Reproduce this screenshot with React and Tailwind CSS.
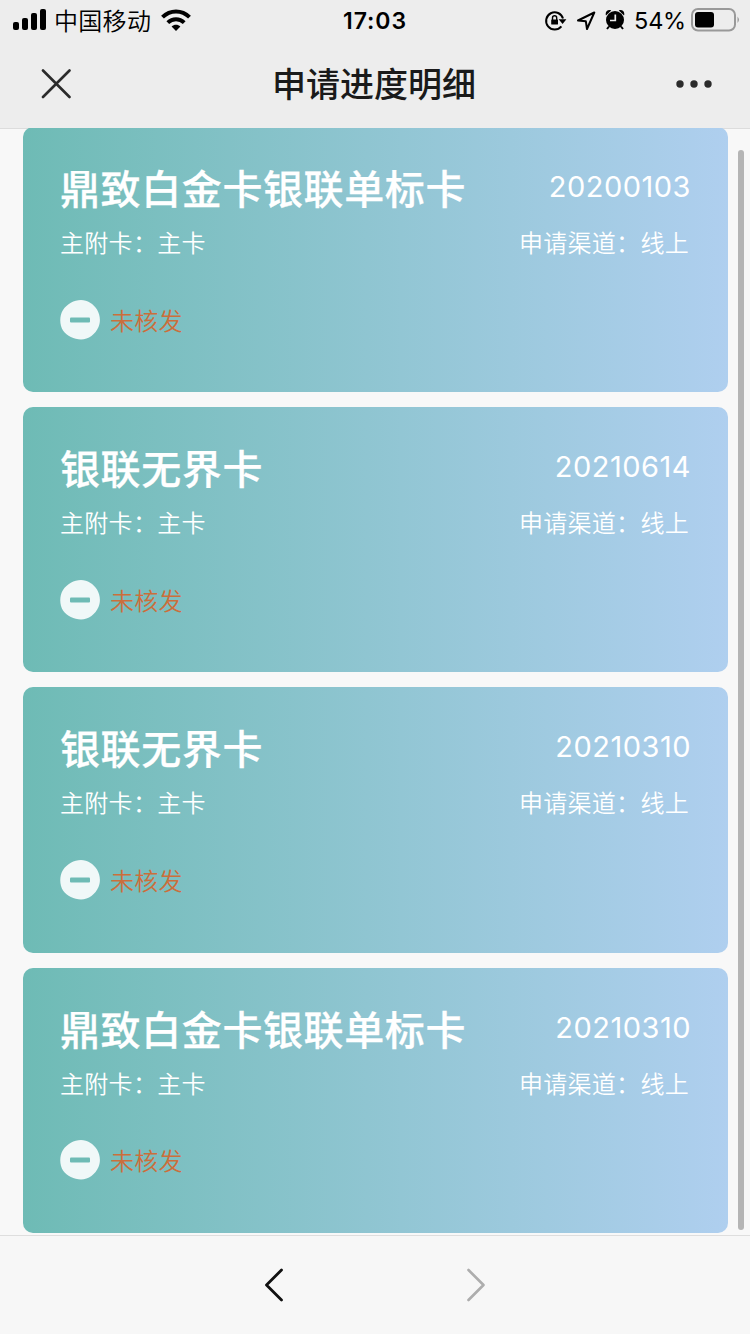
import React from "react";

const CARDS = [
  { name: "鼎致白金卡银联单标卡", date: "20200103", height: "h-[265px]", statusGap: "mt-[41px]" },
  { name: "银联无界卡", date: "20210614", height: "h-[265px]", statusGap: "mt-[41px]" },
  { name: "银联无界卡", date: "20210310", height: "h-[266px]", statusGap: "mt-[41px]" },
  { name: "鼎致白金卡银联单标卡", date: "20210310", height: "h-[265px]", statusGap: "mt-[40px]" },
];

function StatusBar() {
  return (
    <div className="flex h-10 items-center justify-between text-black">
      <div className="flex w-[300px] items-center pl-[13px]">
        <svg className="h-[22px] w-[34px]" viewBox="0 0 34 22">
          <rect x="0" y="13" width="6" height="8" rx="2" />
          <rect x="9" y="9" width="6" height="12" rx="2" />
          <rect x="18" y="4" width="6" height="17" rx="2" />
          <rect x="27" y="0" width="6" height="21" rx="2" />
        </svg>
        <span className="ml-[7px] text-[24px] font-[350] leading-10 tracking-[0.3px]">中国移动</span>
        <svg className="ml-[10px] h-[22px] w-[30px]" viewBox="0 0 30 22" fill="none" stroke="#000" strokeWidth="4">
          <path d="M1.5 8.2C9.2 .6 20.8 .6 28.5 8.2" />
          <path d="M6.8 13.6C11.5 9.2 18.5 9.2 23.2 13.6" />
          <path d="M10.6 17.6C13.2 15.2 16.8 15.2 19.4 17.6L15 22Z" fill="#000" stroke="none" />
        </svg>
      </div>
      <div className="pt-0.5 font-['Inter'] text-[23px] font-semibold leading-10 tracking-[0.9px]">17:03</div>
      <div className="flex w-[300px] items-center justify-end pr-[10px]">
        <svg className="h-6 w-[23px]" viewBox="0 0 23 24" fill="none" stroke="#000" strokeWidth="2">
          <path d="M17.4 18.3A8.6 8.6 0 1 1 19 10.5" />
          <path d="M14.6 11.2H22.4L18.6 16Z" fill="#000" stroke="none" />
          <rect x="7.2" y="11.4" width="6.8" height="5.2" rx=".7" fill="#000" stroke="none" />
          <path d="M8.5 12V9.9a2.1 2.1 0 0 1 4.2 0v2" strokeWidth="1.4" />
        </svg>
        <svg className="ml-[9px] h-6 w-5" viewBox="0 0 20 24" fill="none" stroke="#000" strokeWidth="2" strokeLinejoin="round">
          <path d="M2 12.5L18.3 4.5L11 21L9.8 13.2Z" />
        </svg>
        <svg className="ml-[9px] h-6 w-5" viewBox="0 0 20 24">
          <circle cx="10" cy="12" r="9" />
          <path d="M1 7.5C-.4 4 3 1 6.2 2.5Z M19 7.5C20.4 4 17 1 13.8 2.5Z" />
          <path d="M4 18.5L2 21M16 18.5L18 21" stroke="#000" strokeWidth="2" />
          <path d="M10.3 6.5V12.5H5" fill="none" stroke="#ededed" strokeWidth="1.7" />
        </svg>
        <span className="ml-[9px] pt-0.5 font-['Inter'] text-[23.5px] leading-10 tracking-[-0.2px]">54%</span>
        <svg className="ml-[5px] h-6 w-[49px]" viewBox="0 0 49 24">
          <rect x="1" y="1" width="43" height="21.5" rx="6" fill="none" stroke="#999" strokeWidth="2" />
          <rect x="4" y="4" width="19" height="15.5" rx="3" />
          <path d="M46.5 8.5Q49.5 11.8 46.5 15Z" fill="#999" />
        </svg>
      </div>
    </div>
  );
}

function NavBar() {
  return (
    <div className="flex h-[88px] items-center justify-between pl-[41px] pr-[37px]">
      <svg className="h-[30px] w-[74px]" viewBox="0 0 74 30" fill="none" stroke="#2b2b2b" strokeWidth="2.6" strokeLinecap="round">
        <path d="M2 1.5L28.5 28M28.5 1.5L2 28" />
      </svg>
      <h1 className="pb-0.5 text-[34px] font-medium leading-[48px] text-[#1a1a1a]">申请进度明细</h1>
      <svg className="h-[10px] w-[80px]" viewBox="0 0 80 10" fill="#2b2b2b">
        <circle cx="47" cy="5" r="3.7" />
        <circle cx="61" cy="5" r="3.7" />
        <circle cx="75" cy="5" r="3.7" />
      </svg>
    </div>
  );
}

function Card({ card }) {
  return (
    <section
      className={`${card.height} w-[705px] shrink-0 rounded-[10px] bg-linear-to-r from-[#6ebbb5] to-[#afcfef] px-[37px] pt-[32px] text-white`}
    >
      <div className="flex h-[56px] items-center justify-between">
        <h2 className="text-[40px] font-medium leading-[56px] tracking-[0.6px] [-webkit-text-stroke:0.25px_white]">{card.name}</h2>
        <span className="font-['Inter'] text-[29px] leading-[56px] tracking-[0.5px]">{card.date}</span>
      </div>
      <div className="mt-[8px] flex h-[36px] items-center justify-between pt-0.5 text-[24px] font-[350] leading-[34px] tracking-[0.3px]">
        <span>主附卡：主卡</span>
        <span className="pr-[2px]">申请渠道：线上</span>
      </div>
      <div className={`${card.statusGap} flex h-10 items-center`}>
        <svg className="h-10 w-10" viewBox="0 0 40 40">
          <path d="M21 0C27.5 0 33.5 4 37 9.5C40 14.5 41 21.5 38.5 27C35.5 34 28.5 39.5 21 39.5C14 39 7 36.5 3 30.5C-.5 25 -.8 16 3 10C7 4 14 0 21 0Z" fill="#f0f8f8" />
          <rect x="10" y="17.5" width="20" height="5" rx="1" fill="#6ebbb5" />
        </svg>
        <span className="ml-[10px] text-[24px] font-[350] leading-10 tracking-[0.3px] text-[#cc6e3b]">未核发</span>
      </div>
    </section>
  );
}

export default function App() {
  return (
    <div className="flex h-[1334px] w-[750px] flex-col overflow-hidden whitespace-nowrap bg-[#f8f8f8] font-['Noto_Sans_CJK_SC',sans-serif]">
      <header className="z-10 h-[128px] shrink-0 bg-[#ededed]">
        <StatusBar />
        <NavBar />
      </header>
      <main className="flex h-[1107px] shrink-0 justify-between border-t border-[#dcdcdc] pl-[23px] pr-[6px]">
        <div className="-mt-[2px] flex flex-col gap-[15px]">
          {CARDS.map((card, i) => (
            <Card key={i} card={card} />
          ))}
        </div>
        <div className="mt-[21px] h-[1080px] w-[6px] rounded-full bg-[#b5b5b5]" />
      </main>
      <footer className="flex h-[99px] shrink-0 items-center justify-center gap-[182px] border-t border-[#dedede] bg-[#f7f7f7]">
        <svg className="h-[34px] w-5" viewBox="0 0 20 34" fill="none" stroke="#111" strokeWidth="2.8" strokeLinecap="round" strokeLinejoin="round">
          <path d="M17.5 2L2.5 17L17.5 32" />
        </svg>
        <svg className="h-[34px] w-5" viewBox="0 0 20 34" fill="none" stroke="#adadad" strokeWidth="2.6" strokeLinecap="round" strokeLinejoin="round">
          <path d="M2.5 2L17.5 17L2.5 32" />
        </svg>
      </footer>
    </div>
  );
}
